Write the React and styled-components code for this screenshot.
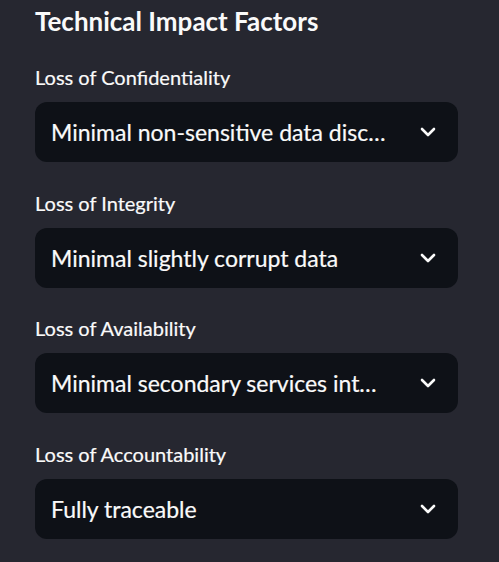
import React from "react";
import styled, { createGlobalStyle } from "styled-components";

const Global = createGlobalStyle`
  html, body { margin: 0; padding: 0; background: #262730; }
  body { font-family: "Lato", "Noto Sans", sans-serif; color: #fafafa; }
`;

const Panel = styled.div`
  width: 499px;
  height: 562px;
  box-sizing: border-box;
  padding: 4px 41px 0 35px;
  background: #262730;
  display: flex;
  flex-direction: column;
`;

const Heading = styled.h3`
  margin: 0 0 26px;
  font-size: 26px;
  line-height: 34px;
  font-weight: 700;
  color: #fafafa;
`;

const Field = styled.div`
  display: flex;
  flex-direction: column;
  gap: 12px;
  margin-bottom: 27.5px;
`;

const Label = styled.label`
  font-size: 20px;
  line-height: 26px;
  color: #fafafa;
  -webkit-text-stroke: 0.2px #fafafa;
`;

const Select = styled.div`
  height: 60px;
  box-sizing: border-box;
  background: #0e1117;
  border-radius: 12px;
  display: flex;
  align-items: center;
  padding: 0 22px 0 16px;
  gap: 12px;
`;

const Value = styled.span`
  flex: 1;
  min-width: 0;
  max-width: ${(p) => p.$max || 340}px;
  font-size: 23px;
  white-space: nowrap;
  overflow: hidden;
  text-overflow: ellipsis;
  -webkit-text-stroke: 0.2px #fafafa;
`;

const Chevron = () => (
  <svg width="16" height="10" viewBox="0 0 16 10" style={{ marginLeft: "auto", flexShrink: 0 }}>
    <path d="M2 2 L8 8 L14 2" fill="none" stroke="#fafafa" strokeWidth="2.6" strokeLinecap="round" strokeLinejoin="round" />
  </svg>
);

const fields = [
  ["Loss of Confidentiality", "Minimal non-sensitive data disclosed", 338],
  ["Loss of Integrity", "Minimal slightly corrupt data", 340],
  ["Loss of Availability", "Minimal secondary services interrupted", 333],
  ["Loss of Accountability", "Fully traceable", 340],
];

export default function App() {
  return (
    <>
      <Global />
      <Panel>
        <Heading>Technical Impact Factors</Heading>
        {fields.map(([label, value, max]) => (
          <Field key={label}>
            <Label>{label}</Label>
            <Select>
              <Value $max={max}>{value}</Value>
              <Chevron />
            </Select>
          </Field>
        ))}
      </Panel>
    </>
  );
}
